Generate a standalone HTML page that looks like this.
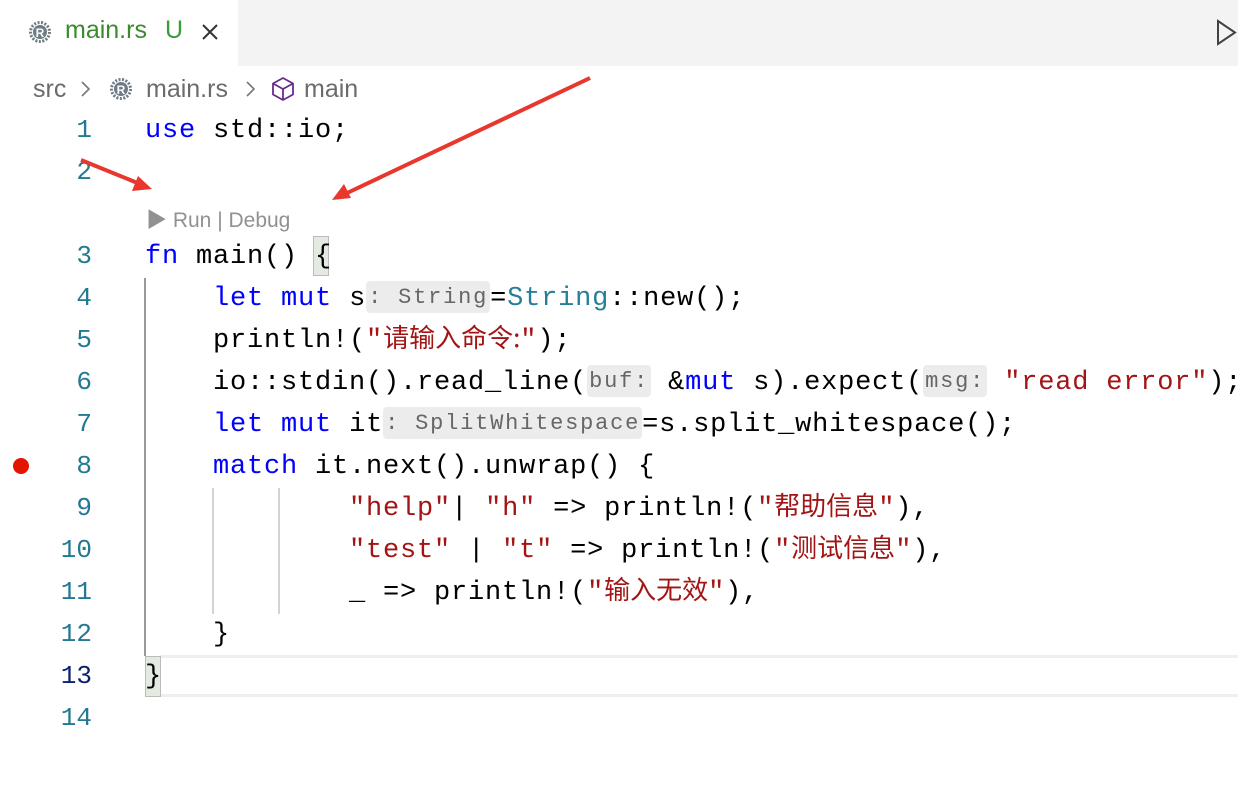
<!DOCTYPE html>
<html><head><meta charset="utf-8"><style>
*{margin:0;padding:0;box-sizing:border-box}
body{width:1238px;height:796px;background:#fff;position:relative;overflow:hidden;font-family:"Liberation Sans","Noto Sans CJK SC",sans-serif}
.tabbar{position:absolute;left:0;top:0;width:1238px;height:66px;background:#f3f3f3}
.tab{position:absolute;left:0;top:0;width:238px;height:66px;background:#fff}
.ln{position:absolute;left:0;width:92px;text-align:right;font-family:"Liberation Mono",monospace;font-size:26px;color:#237893;height:42px;line-height:42px}
.cl{position:absolute;left:145px;height:42px;line-height:42px;font-family:"Liberation Mono","Noto Sans CJK SC",monospace;font-size:27px;letter-spacing:0.8px;white-space:pre;color:#000}
.k{color:#0000ff}.s{color:#a31515}.t{color:#267f99}
.h{background:#ececec;color:#666;font-size:22px;letter-spacing:1.8px;line-height:1;border-radius:4px;padding:4px 2px 3px;position:relative;top:-2px}
.cjk{letter-spacing:0;font-family:"Noto Sans CJK SC",sans-serif;font-size:26px;line-height:1}
</style></head><body>
<div class="tabbar"><div class="tab"></div>
<svg style="position:absolute;left:28px;top:20px" width="24" height="24" viewBox="0 0 24 24"><circle cx="12" cy="12" r="9.5" fill="none" stroke="#6d7b84" stroke-width="3" stroke-dasharray="2 1.5"/><circle cx="12" cy="12" r="7" fill="#6d7b84"/><text x="12" y="17" text-anchor="middle" font-size="12" font-weight="bold" fill="#fff" font-family="Liberation Sans">R</text></svg>
<div style="position:absolute;left:65px;top:16px;font-size:25px;color:#3b8a2e">main.rs</div>
<div style="position:absolute;left:165px;top:16px;font-size:25px;color:#3b9a3a">U</div>
<svg style="position:absolute;left:201px;top:23px" width="18" height="18"><path d="M2 2L16 16M16 2L2 16" stroke="#333" stroke-width="2"/></svg>
<svg style="position:absolute;left:1215px;top:19px" width="23" height="27"><path d="M3 2L20 13.5L3 25Z" fill="none" stroke="#424242" stroke-width="2"/></svg>
</div>
<div style="position:absolute;left:33px;top:75px;font-size:25px;color:#6b6b6b">src</div>
<svg style="position:absolute;left:80px;top:80px" width="12" height="18"><path d="M2 2L9 9L2 16" fill="none" stroke="#777" stroke-width="1.6"/></svg>
<svg style="position:absolute;left:109px;top:77px" width="24" height="24" viewBox="0 0 24 24"><circle cx="12" cy="12" r="9.5" fill="none" stroke="#6d7b84" stroke-width="3" stroke-dasharray="2 1.5"/><circle cx="12" cy="12" r="7" fill="#6d7b84"/><text x="12" y="17" text-anchor="middle" font-size="12" font-weight="bold" fill="#fff" font-family="Liberation Sans">R</text></svg>
<div style="position:absolute;left:146px;top:75px;font-size:25px;color:#6b6b6b">main.rs</div>
<svg style="position:absolute;left:245px;top:80px" width="12" height="18"><path d="M2 2L9 9L2 16" fill="none" stroke="#777" stroke-width="1.6"/></svg>
<svg style="position:absolute;left:270px;top:76px" width="26" height="26" viewBox="0 0 26 26"><path d="M13 2L23 7.5V18.5L13 24L3 18.5V7.5Z M3 7.5L13 13L23 7.5 M13 13V24" fill="none" stroke="#652d90" stroke-width="1.8" stroke-linejoin="round"/></svg>
<div style="position:absolute;left:304px;top:75px;font-size:25px;color:#6b6b6b">main</div>

<div style="position:absolute;left:160px;top:655px;width:1078px;height:42px;border-top:3px solid #eee;border-bottom:3px solid #eee"></div>
<div style="position:absolute;left:145px;top:656px;width:16px;height:41px;background:#e3ebe0;border:1px solid #bbb"></div>
<div style="position:absolute;left:313px;top:236px;width:16px;height:40px;background:#e3ebe0;border:1px solid #bbb"></div>
<div style="position:absolute;left:144px;top:278px;width:2px;height:378px;background:#999"></div>
<div style="position:absolute;left:212px;top:488px;width:2px;height:126px;background:#d3d3d3"></div>
<div style="position:absolute;left:278px;top:488px;width:2px;height:126px;background:#d3d3d3"></div>
<div style="position:absolute;left:13px;top:458px;width:16px;height:16px;border-radius:50%;background:#e51400"></div>

<div class="ln" style="top:109px">1</div><div class="ln" style="top:151px">2</div>
<div class="ln" style="top:235px">3</div><div class="ln" style="top:277px">4</div>
<div class="ln" style="top:319px">5</div><div class="ln" style="top:361px">6</div>
<div class="ln" style="top:403px">7</div><div class="ln" style="top:445px">8</div>
<div class="ln" style="top:487px">9</div><div class="ln" style="top:529px">10</div>
<div class="ln" style="top:571px">11</div><div class="ln" style="top:613px">12</div>
<div class="ln" style="top:655px;color:#0b216f">13</div><div class="ln" style="top:697px">14</div>

<div class="cl" style="top:110px"><span class="k">use</span> std::io;</div>
<div style="position:absolute;left:146px;top:204px;font-size:21px;color:#919191">▶ Run | Debug</div>
<div class="cl" style="top:236px"><span class="k">fn</span> main() {</div>
<div class="cl" style="top:278px">    <span class="k">let</span> <span class="k">mut</span> s<span class="h">: String</span>=<span class="t">String</span>::new();</div>
<div class="cl" style="top:320px">    println!(<span class="s">"<span class="cjk">请输入命令:</span>"</span>);</div>
<div class="cl" style="top:362px">    io::stdin().read_line(<span class="h">buf:</span> &amp;<span class="k">mut</span> s).expect(<span class="h">msg:</span> <span class="s">"read error"</span>);</div>
<div class="cl" style="top:404px">    <span class="k">let</span> <span class="k">mut</span> it<span class="h">: SplitWhitespace</span>=s.split_whitespace();</div>
<div class="cl" style="top:446px">    <span class="k">match</span> it.next().unwrap() {</div>
<div class="cl" style="top:488px">            <span class="s">"help"</span>| <span class="s">"h"</span> =&gt; println!(<span class="s">"<span class="cjk">帮助信息</span>"</span>),</div>
<div class="cl" style="top:530px">            <span class="s">"test"</span> | <span class="s">"t"</span> =&gt; println!(<span class="s">"<span class="cjk">测试信息</span>"</span>),</div>
<div class="cl" style="top:572px">            _ =&gt; println!(<span class="s">"<span class="cjk">输入无效</span>"</span>),</div>
<div class="cl" style="top:614px">    }</div>
<div class="cl" style="top:656px">}</div>

<svg style="position:absolute;left:0;top:0" width="1238" height="796">
<g stroke="#e8372c" stroke-width="4" fill="#e8372c">
<line x1="81" y1="160" x2="140" y2="184"/><path d="M152 189L132 191L138 176Z" stroke="none"/>
<line x1="590" y1="78" x2="345" y2="194"/><path d="M332 200L344 184L351 198Z" stroke="none"/>
</g></svg>
</body></html>
